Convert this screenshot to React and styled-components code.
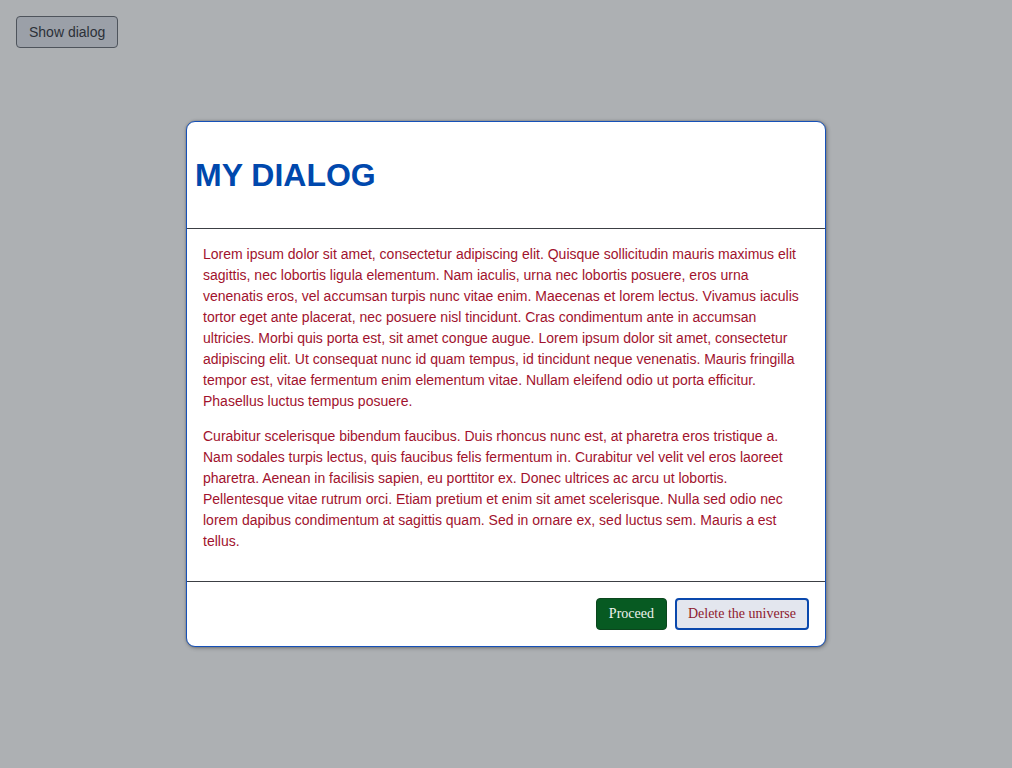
import React from "react";
import styled, { createGlobalStyle } from "styled-components";

const Global = createGlobalStyle`
  html, body { margin: 0; padding: 0; }
  body {
    background: #adb0b3;
    font-family: "Liberation Sans", Arial, sans-serif;
    width: 1012px;
    height: 768px;
    overflow: hidden;
  }
`;

const Page = styled.div`
  position: relative;
  width: 1012px;
  height: 768px;
  padding: 16px;
  box-sizing: border-box;
`;

const ShowButton = styled.button`
  font-family: "Liberation Sans", Arial, sans-serif;
  font-size: 14px;
  line-height: 18px;
  padding: 6px 12px;
  background: #9ba0a8;
  color: #2c3138;
  border: 1px solid #4e545c;
  border-radius: 4px;
  cursor: pointer;
`;

const Backdrop = styled.div`
  position: absolute;
  inset: 0;
  display: flex;
  align-items: center;
  justify-content: center;
`;

const Dialog = styled.div`
  width: 640px;
  box-sizing: border-box;
  background: #ffffff;
  border: 1px solid #1550b8;
  border-radius: 9px;
  box-shadow: 0 0 2px rgba(0, 0, 0, 0.3), 1px 1px 4px rgba(0, 0, 0, 0.3);
  overflow: hidden;
  display: flex;
  flex-direction: column;
`;

const Header = styled.header`
  padding: 35px 8px 34px;
  border-bottom: 1px solid #3c3f44;
`;

const Title = styled.h1`
  margin: 0;
  font-family: "Liberation Sans", Arial, sans-serif;
  font-size: 32px;
  line-height: 37px;
  font-weight: bold;
  color: #0048ad;
`;

const Body = styled.div`
  padding: 1px 16px 15px;
`;

const Para = styled.p`
  margin: 14px 0;
  font-size: 14px;
  line-height: 21px;
  color: #a1122d;
`;

const Footer = styled.footer`
  border-top: 1px solid #3c3f44;
  padding: 16px;
  display: flex;
  justify-content: flex-end;
  gap: 8px;
`;

const ActionButton = styled.button`
  font-family: "Liberation Serif", "Times New Roman", serif;
  font-size: 14px;
  line-height: 18px;
  height: 32px;
  border-radius: 4px;
  cursor: pointer;
  padding: ${(p) => (p.$variant === "danger" ? "0 11px" : "0 12px")};
  background: ${(p) => (p.$variant === "danger" ? "#e3e6ee" : "#075a22")};
  color: ${(p) => (p.$variant === "danger" ? "#8e1a2e" : "#eef3ee")};
  border: ${(p) =>
    p.$variant === "danger" ? "2px solid #0a48ad" : "1px solid #0b461d"};
`;

const p1 =
  "Lorem ipsum dolor sit amet, consectetur adipiscing elit. Quisque sollicitudin mauris maximus elit sagittis, nec lobortis ligula elementum. Nam iaculis, urna nec lobortis posuere, eros urna venenatis eros, vel accumsan turpis nunc vitae enim. Maecenas et lorem lectus. Vivamus iaculis tortor eget ante placerat, nec posuere nisl tincidunt. Cras condimentum ante in accumsan ultricies. Morbi quis porta est, sit amet congue augue. Lorem ipsum dolor sit amet, consectetur adipiscing elit. Ut consequat nunc id quam tempus, id tincidunt neque venenatis. Mauris fringilla tempor est, vitae fermentum enim elementum vitae. Nullam eleifend odio ut porta efficitur. Phasellus luctus tempus posuere.";

const p2 =
  "Curabitur scelerisque bibendum faucibus. Duis rhoncus nunc est, at pharetra eros tristique a. Nam sodales turpis lectus, quis faucibus felis fermentum in. Curabitur vel velit vel eros laoreet pharetra. Aenean in facilisis sapien, eu porttitor ex. Donec ultrices ac arcu ut lobortis. Pellentesque vitae rutrum orci. Etiam pretium et enim sit amet scelerisque. Nulla sed odio nec lorem dapibus condimentum at sagittis quam. Sed in ornare ex, sed luctus sem. Mauris a est tellus.";

export default function App() {
  return (
    <>
      <Global />
      <Page>
        <ShowButton>Show dialog</ShowButton>
        <Backdrop>
          <Dialog role="dialog">
            <Header>
              <Title>MY DIALOG</Title>
            </Header>
            <Body>
              <Para>{p1}</Para>
              <Para>{p2}</Para>
            </Body>
            <Footer>
              <ActionButton>Proceed</ActionButton>
              <ActionButton $variant="danger">Delete the universe</ActionButton>
            </Footer>
          </Dialog>
        </Backdrop>
      </Page>
    </>
  );
}
